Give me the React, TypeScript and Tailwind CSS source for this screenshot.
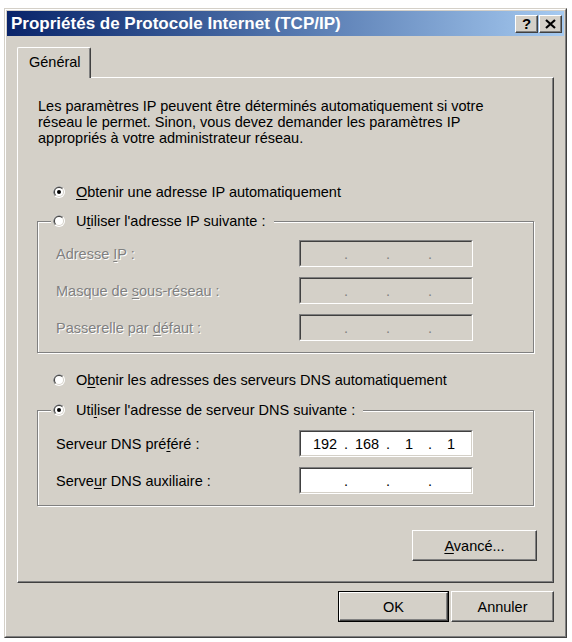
import { Fragment, type ReactNode } from "react";

function U({ children }: { children: ReactNode }) {
  return <span className="underline decoration-1 underline-offset-[2px]">{children}</span>;
}

function Radio({ checked }: { checked?: boolean }) {
  return (
    <svg width="12" height="12" viewBox="0 0 12 12" className="shrink-0">
      <circle cx="6" cy="6" r="6" fill="#ffffff" />
      <path d="M1.76 10.24A6 6 0 0 1 10.24 1.76Z" fill="#808080" />
      <circle cx="6" cy="6" r="5" fill="#d4d0c8" />
      <path d="M2.46 9.54A5 5 0 0 1 9.54 2.46Z" fill="#404040" />
      <circle cx="6" cy="6" r="4" fill="#ffffff" />
      {checked && <circle cx="6" cy="6" r="2" fill="#000000" />}
    </svg>
  );
}

function RadioRow({ checked, children }: { checked?: boolean; children: ReactNode }) {
  return (
    <div className="flex h-[16px] items-center gap-[11px]">
      <Radio checked={checked} />
      <span className="whitespace-nowrap">{children}</span>
    </div>
  );
}

function IpField({ values, disabled }: { values?: string[]; disabled?: boolean }) {
  const v = values ?? ["", "", "", ""];
  return (
    <div className="h-[27px] w-[174px] border border-t-[#808080] border-l-[#808080] border-r-white border-b-white">
      <div
        className={`flex h-full items-center border border-t-[#404040] border-l-[#404040] border-r-[#d4d0c8] border-b-[#d4d0c8] pl-[6px] ${
          disabled ? "bg-[#d4d0c8] text-[#808080]" : "bg-white text-black"
        }`}
      >
        {v.map((x, i) => (
          <Fragment key={i}>
            <span className="w-[36px] text-center">{x}</span>
            {i < 3 && <span className="w-[6px] text-center">.</span>}
          </Fragment>
        ))}
      </div>
    </div>
  );
}

function Row({ label, disabled, values }: { label: ReactNode; disabled?: boolean; values?: string[] }) {
  return (
    <div className="flex items-center">
      <span
        className={`w-[243px] whitespace-nowrap ${
          disabled ? "text-[#808080] [text-shadow:1px_1px_0_#ffffff]" : ""
        }`}
      >
        {label}
      </span>
      <IpField values={values} disabled={disabled} />
    </div>
  );
}

function Group({ legend, checked, pt, children }: { legend: ReactNode; checked?: boolean; pt: string; children: ReactNode }) {
  return (
    <div
      className={`relative flex w-[497px] flex-col gap-[10px] border border-[#808080] pb-[11px] pl-[18px] shadow-[inset_1px_1px_0_#ffffff,1px_1px_0_#ffffff] ${pt}`}
    >
      <div className="absolute -top-[9px] left-[13px] flex h-[16px] items-center gap-[11px] bg-[#d4d0c8] pl-[2px] pr-[8px]">
        <Radio checked={checked} />
        <span className="whitespace-nowrap">{legend}</span>
      </div>
      {children}
    </div>
  );
}

function Btn({ children, className }: { children: ReactNode; className?: string }) {
  return (
    <div
      className={`flex items-center justify-center border border-t-white border-l-white border-r-[#404040] border-b-[#404040] bg-[#d4d0c8] shadow-[inset_-1px_-1px_0_#808080] ${className ?? ""}`}
    >
      {children}
    </div>
  );
}

export default function App() {
  return (
    <div className="h-[642px] w-[572px] bg-white pl-[4px] pt-[8px] font-['Liberation_Sans',Arial,sans-serif] text-[14.5px] leading-[16px] text-black">
      <div className="h-[630px] w-[563px] border border-t-[#d4d0c8] border-l-[#d4d0c8] border-r-[#404040] border-b-[#404040] bg-[#d4d0c8]">
        <div className="flex h-full flex-col border border-t-white border-l-white border-r-[#808080] border-b-[#808080] p-[1px]">
          {/* title bar */}
          <div className="flex h-[25px] items-center justify-between bg-linear-to-r from-[#0a246a] to-[#a6caf0] pl-[4px] pr-[2px]">
            <span className="whitespace-nowrap text-[17px] font-bold text-white">
              Propriétés de Protocole Internet (TCP/IP)
            </span>
            <div className="flex gap-[1px]">
              <Btn className="h-[18px] w-[23px]">
                <span className="text-[15px] font-bold leading-none">?</span>
              </Btn>
              <Btn className="h-[18px] w-[23px]">
                <svg width="11" height="10" viewBox="0 0 11 10">
                  <path d="M1 1L10 9M10 1L1 9" stroke="#000" strokeWidth="2.2" />
                </svg>
              </Btn>
            </div>
          </div>

          <div className="flex flex-col pl-[10px] pt-[11px]">
            {/* tab */}
            <div className="relative z-10 -mb-[1px] flex h-[31px] w-[74px] items-center rounded-t-[2px] border-l border-t border-r border-l-white border-t-white border-r-[#404040] bg-[#d4d0c8] pb-[2px] pl-[11px] shadow-[inset_-1px_0_0_#808080]">
              Général
            </div>

            {/* panel */}
            <div className="flex h-[506px] w-[537px] flex-col border border-l-white border-t-white border-r-[#404040] border-b-[#404040] pl-[19px] pt-[20px] shadow-[inset_-1px_-1px_0_#808080]">
              <p className="ml-[1px] whitespace-nowrap">
                Les paramètres IP peuvent être déterminés automatiquement si votre
                <br />
                réseau le permet. Sinon, vous devez demander les paramètres IP
                <br />
                appropriés à votre administrateur réseau.
              </p>

              <div className="ml-[16px] mt-[38px]">
                <RadioRow checked>
                  <U>O</U>btenir une adresse IP automatiquement
                </RadioRow>
              </div>

              <div className="mt-[21px]">
                <Group
                  pt="pt-[18px]"
                  legend={
                    <>
                      U<U>t</U>iliser l'adresse IP suivante :
                    </>
                  }
                >
                  <Row
                    disabled
                    label={
                      <>
                        Adresse <U>I</U>P :
                      </>
                    }
                  />
                  <Row
                    disabled
                    label={
                      <>
                        Masque de <U>s</U>ous-réseau :
                      </>
                    }
                  />
                  <Row
                    disabled
                    label={
                      <>
                        Passerelle par <U>d</U>éfaut :
                      </>
                    }
                  />
                </Group>
              </div>

              <div className="ml-[16px] mt-[19px]">
                <RadioRow>
                  O<U>b</U>tenir les adresses des serveurs DNS automatiquement
                </RadioRow>
              </div>

              <div className="mt-[22px]">
                <Group
                  checked
                  pt="pt-[19px]"
                  legend={
                    <>
                      Uti<U>l</U>iser l'adresse de serveur DNS suivante :
                    </>
                  }
                >
                  <Row
                    values={["192", "168", "1", "1"]}
                    label={
                      <>
                        Serveur DNS pré<U>f</U>éré :
                      </>
                    }
                  />
                  <Row
                    label={
                      <>
                        Serve<U>u</U>r DNS auxiliaire :
                      </>
                    }
                  />
                </Group>
              </div>

              <Btn className="mr-[16px] mt-[24px] h-[31px] w-[125px] self-end">
                <span>
                  <U>A</U>vancé...
                </span>
              </Btn>
            </div>

            {/* dialog buttons */}
            <div className="mt-[8px] flex w-[537px] justify-end gap-[2px]">
              <div className="h-[31px] w-[111px] border border-black">
                <Btn className="h-full w-full">OK</Btn>
              </div>
              <Btn className="h-[31px] w-[103px]">Annuler</Btn>
            </div>
          </div>
        </div>
      </div>
    </div>
  );
}
